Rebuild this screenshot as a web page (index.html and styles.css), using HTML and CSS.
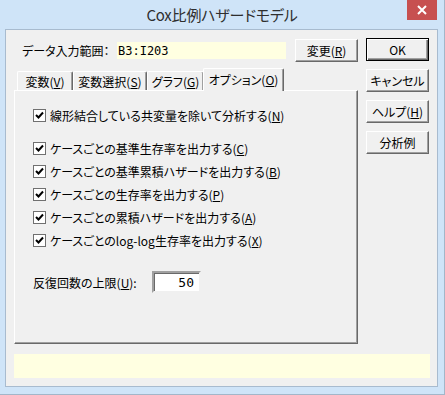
FILE: index.html
```html
<!DOCTYPE html>
<html lang="ja">
<head>
<meta charset="UTF-8">
<title>Cox比例ハザードモデル</title>
<link rel="stylesheet" href="styles.css">
</head>
<body>
<div class="window">
  <div class="titlebar">
    <div class="title">Cox比例ハザードモデル</div>
    <button class="close" type="button">
      <svg width="10" height="10" viewBox="0 0 10 10"><path d="M1 1L9 9M9 1L1 9" stroke="#fff" stroke-width="2"/></svg>
    </button>
  </div>

  <div class="client">
    <div class="main">
      <div class="left">
        <!-- data range -->
        <div class="range-row">
          <span class="range-label">データ入力範囲：</span>
          <span class="range-field">B3:I203</span>
          <button class="btn range-btn" type="button">変更(<u>R</u>)</button>
        </div>

        <!-- tabs -->
        <div class="tabs">
          <div class="tab t1">変数(<u>V</u>)</div>
          <div class="tab t2">変数選択(<u>S</u>)</div>
          <div class="tab t3">グラフ(<u>G</u>)</div>
          <div class="tab t4 active">オプション(<u>O</u>)</div>
        </div>

        <div class="panel">
          <label class="check first"><span class="box"><svg width="9" height="9" viewBox="0 0 9 9"><path d="M1 4L3.5 6.5L8 1.5" fill="none" stroke="#000" stroke-width="2"/></svg></span><span>線形結合している共変量を除いて分析する(<u>N</u>)</span></label>
          <label class="check"><span class="box"><svg width="9" height="9" viewBox="0 0 9 9"><path d="M1 4L3.5 6.5L8 1.5" fill="none" stroke="#000" stroke-width="2"/></svg></span><span>ケースごとの基準生存率を出力する(<u>C</u>)</span></label>
          <label class="check"><span class="box"><svg width="9" height="9" viewBox="0 0 9 9"><path d="M1 4L3.5 6.5L8 1.5" fill="none" stroke="#000" stroke-width="2"/></svg></span><span>ケースごとの基準累積ハザードを出力する(<u>B</u>)</span></label>
          <label class="check"><span class="box"><svg width="9" height="9" viewBox="0 0 9 9"><path d="M1 4L3.5 6.5L8 1.5" fill="none" stroke="#000" stroke-width="2"/></svg></span><span>ケースごとの生存率を出力する(<u>P</u>)</span></label>
          <label class="check"><span class="box"><svg width="9" height="9" viewBox="0 0 9 9"><path d="M1 4L3.5 6.5L8 1.5" fill="none" stroke="#000" stroke-width="2"/></svg></span><span>ケースごとの累積ハザードを出力する(<u>A</u>)</span></label>
          <label class="check"><span class="box"><svg width="9" height="9" viewBox="0 0 9 9"><path d="M1 4L3.5 6.5L8 1.5" fill="none" stroke="#000" stroke-width="2"/></svg></span><span>ケースごとのlog-log生存率を出力する(<u>X</u>)</span></label>

          <div class="iter-row">
            <span class="iter-label">反復回数の上限(<u>U</u>):</span>
            <span class="iter-input">50</span>
          </div>
        </div>
      </div>

      <div class="right">
        <button class="btn default" type="button">OK</button>
        <button class="btn" type="button">キャンセル</button>
        <button class="btn" type="button">ヘルプ(<u>H</u>)</button>
        <button class="btn" type="button">分析例</button>
      </div>
    </div>

    <div class="status"></div>
  </div>
</div>
</body>
</html>
```

FILE: styles.css
```css
body {
  margin: 0;
  font-family: "Noto Sans CJK JP", "Noto Sans", sans-serif;
  font-size: 12px;
  color: #000;
  font-feature-settings: "palt";
}
u {
  text-decoration-thickness: 1px;
  text-underline-offset: 1px;
}
.window {
  width: 445px;
  height: 395px;
  box-sizing: border-box;
  background: #cfe4f8;
  border-right: 1px solid #a3b6c9;
  border-bottom: 1px solid #a3b6c9;
  display: flex;
  flex-direction: column;
}
.titlebar {
  height: 29px;
  display: grid;
  grid-template-columns: 1fr auto 1fr;
}
.title {
  grid-column: 2;
  font-size: 15px;
  line-height: 30px;
  color: #2e2e2e;
  letter-spacing: -0.2px;
}
.close {
  grid-column: 3;
  justify-self: end;
  align-self: start;
  width: 30px;
  height: 20px;
  margin-right: 7px;
  padding: 0;
  border: none;
  background: #c75050;
  display: flex;
  align-items: center;
  justify-content: center;
}
.client {
  flex: 1;
  margin: 0 6px 7px 5px;
  border: 1px solid #a8bbcf;
  background: #f0f0f0;
  padding: 8px 7px 0 8px;
}
.main {
  display: flex;
  gap: 8px;
}
.left {
  width: 344px;
}
.right {
  width: 63px;
  display: flex;
  flex-direction: column;
  gap: 8px;
}
.btn {
  height: 23px;
  width: 63px;
  padding: 0;
  font-family: inherit;
  font-size: 12px;
  font-feature-settings: "palt";
  color: #000;
  background: #f0f0f0;
  border: 1px solid;
  border-color: #fff #696969 #696969 #fff;
  box-shadow: inset -1px -1px #a0a0a0;
}
.btn.default {
  outline: 1px solid #000;
  outline-offset: -1px;
  border-color: #000;
  box-shadow: inset 1px 1px #fff, inset -1px -1px #696969, inset -2px -2px #a0a0a0;
}
.range-row {
  height: 24px;
  display: flex;
  align-items: center;
}
.range-label {
  width: 95px;
  padding-left: 8px;
}
.range-field {
  width: 168px;
  height: 17px;
  padding-left: 1px;
  background: #ffffe1;
  font-family: "DejaVu Sans Mono", monospace;
  font-size: 12px;
  line-height: 19px;
}
.range-btn {
  margin-left: auto;
}
.tabs {
  margin-top: 6px;
  height: 22px;
  padding-left: 3px;
  display: flex;
  align-items: flex-end;
}
.tab {
  height: 19px;
  box-sizing: border-box;
  border-top: 1px solid #fff;
  border-left: 1px solid #fff;
  border-right: 1px solid #696969;
  box-shadow: inset -1px 0 #a0a0a0;
  border-radius: 2px 2px 0 0;
  text-align: center;
  line-height: 19px;
}
.t1 { width: 56px; }
.t2 { width: 74px; }
.t3 { width: 57px; }
.tab.active {
  width: 81px;
  height: 23px;
  margin: 0 0 -1px -1px;
  background: #f0f0f0;
  position: relative;
  line-height: 21px;
}
.panel {
  height: 254px;
  box-sizing: border-box;
  border: 1px solid;
  border-color: #fff #696969 #696969 #fff;
  box-shadow: inset -1px -1px #a0a0a0;
  padding: 13px 0 0 18px;
}
.check {
  height: 23px;
  display: flex;
  align-items: center;
  gap: 4px;
}
.check.first {
  margin-bottom: 10px;
}
.box {
  width: 11px;
  height: 11px;
  border: 1px solid #707070;
  background: #fff;
  display: flex;
  align-items: center;
  justify-content: center;
}
.iter-row {
  margin-top: 19px;
  height: 22px;
  display: flex;
  align-items: center;
}
.iter-label {
  width: 119px;
}
.iter-input {
  width: 40px;
  height: 18px;
  box-sizing: content-box;
  border: 2px solid;
  border-color: #a0a0a0 #f0f0f0 #f0f0f0 #a0a0a0;
  box-shadow: inset 1px 1px #696969, inset -1px -1px #fff;
  background: #fff;
  padding-right: 5px;
  text-align: right;
  font-family: "DejaVu Sans Mono", monospace;
  font-size: 13px;
  line-height: 19px;
}
.status {
  margin-top: 10px;
  width: 416px;
  height: 24px;
  background: #ffffe1;
}
```
